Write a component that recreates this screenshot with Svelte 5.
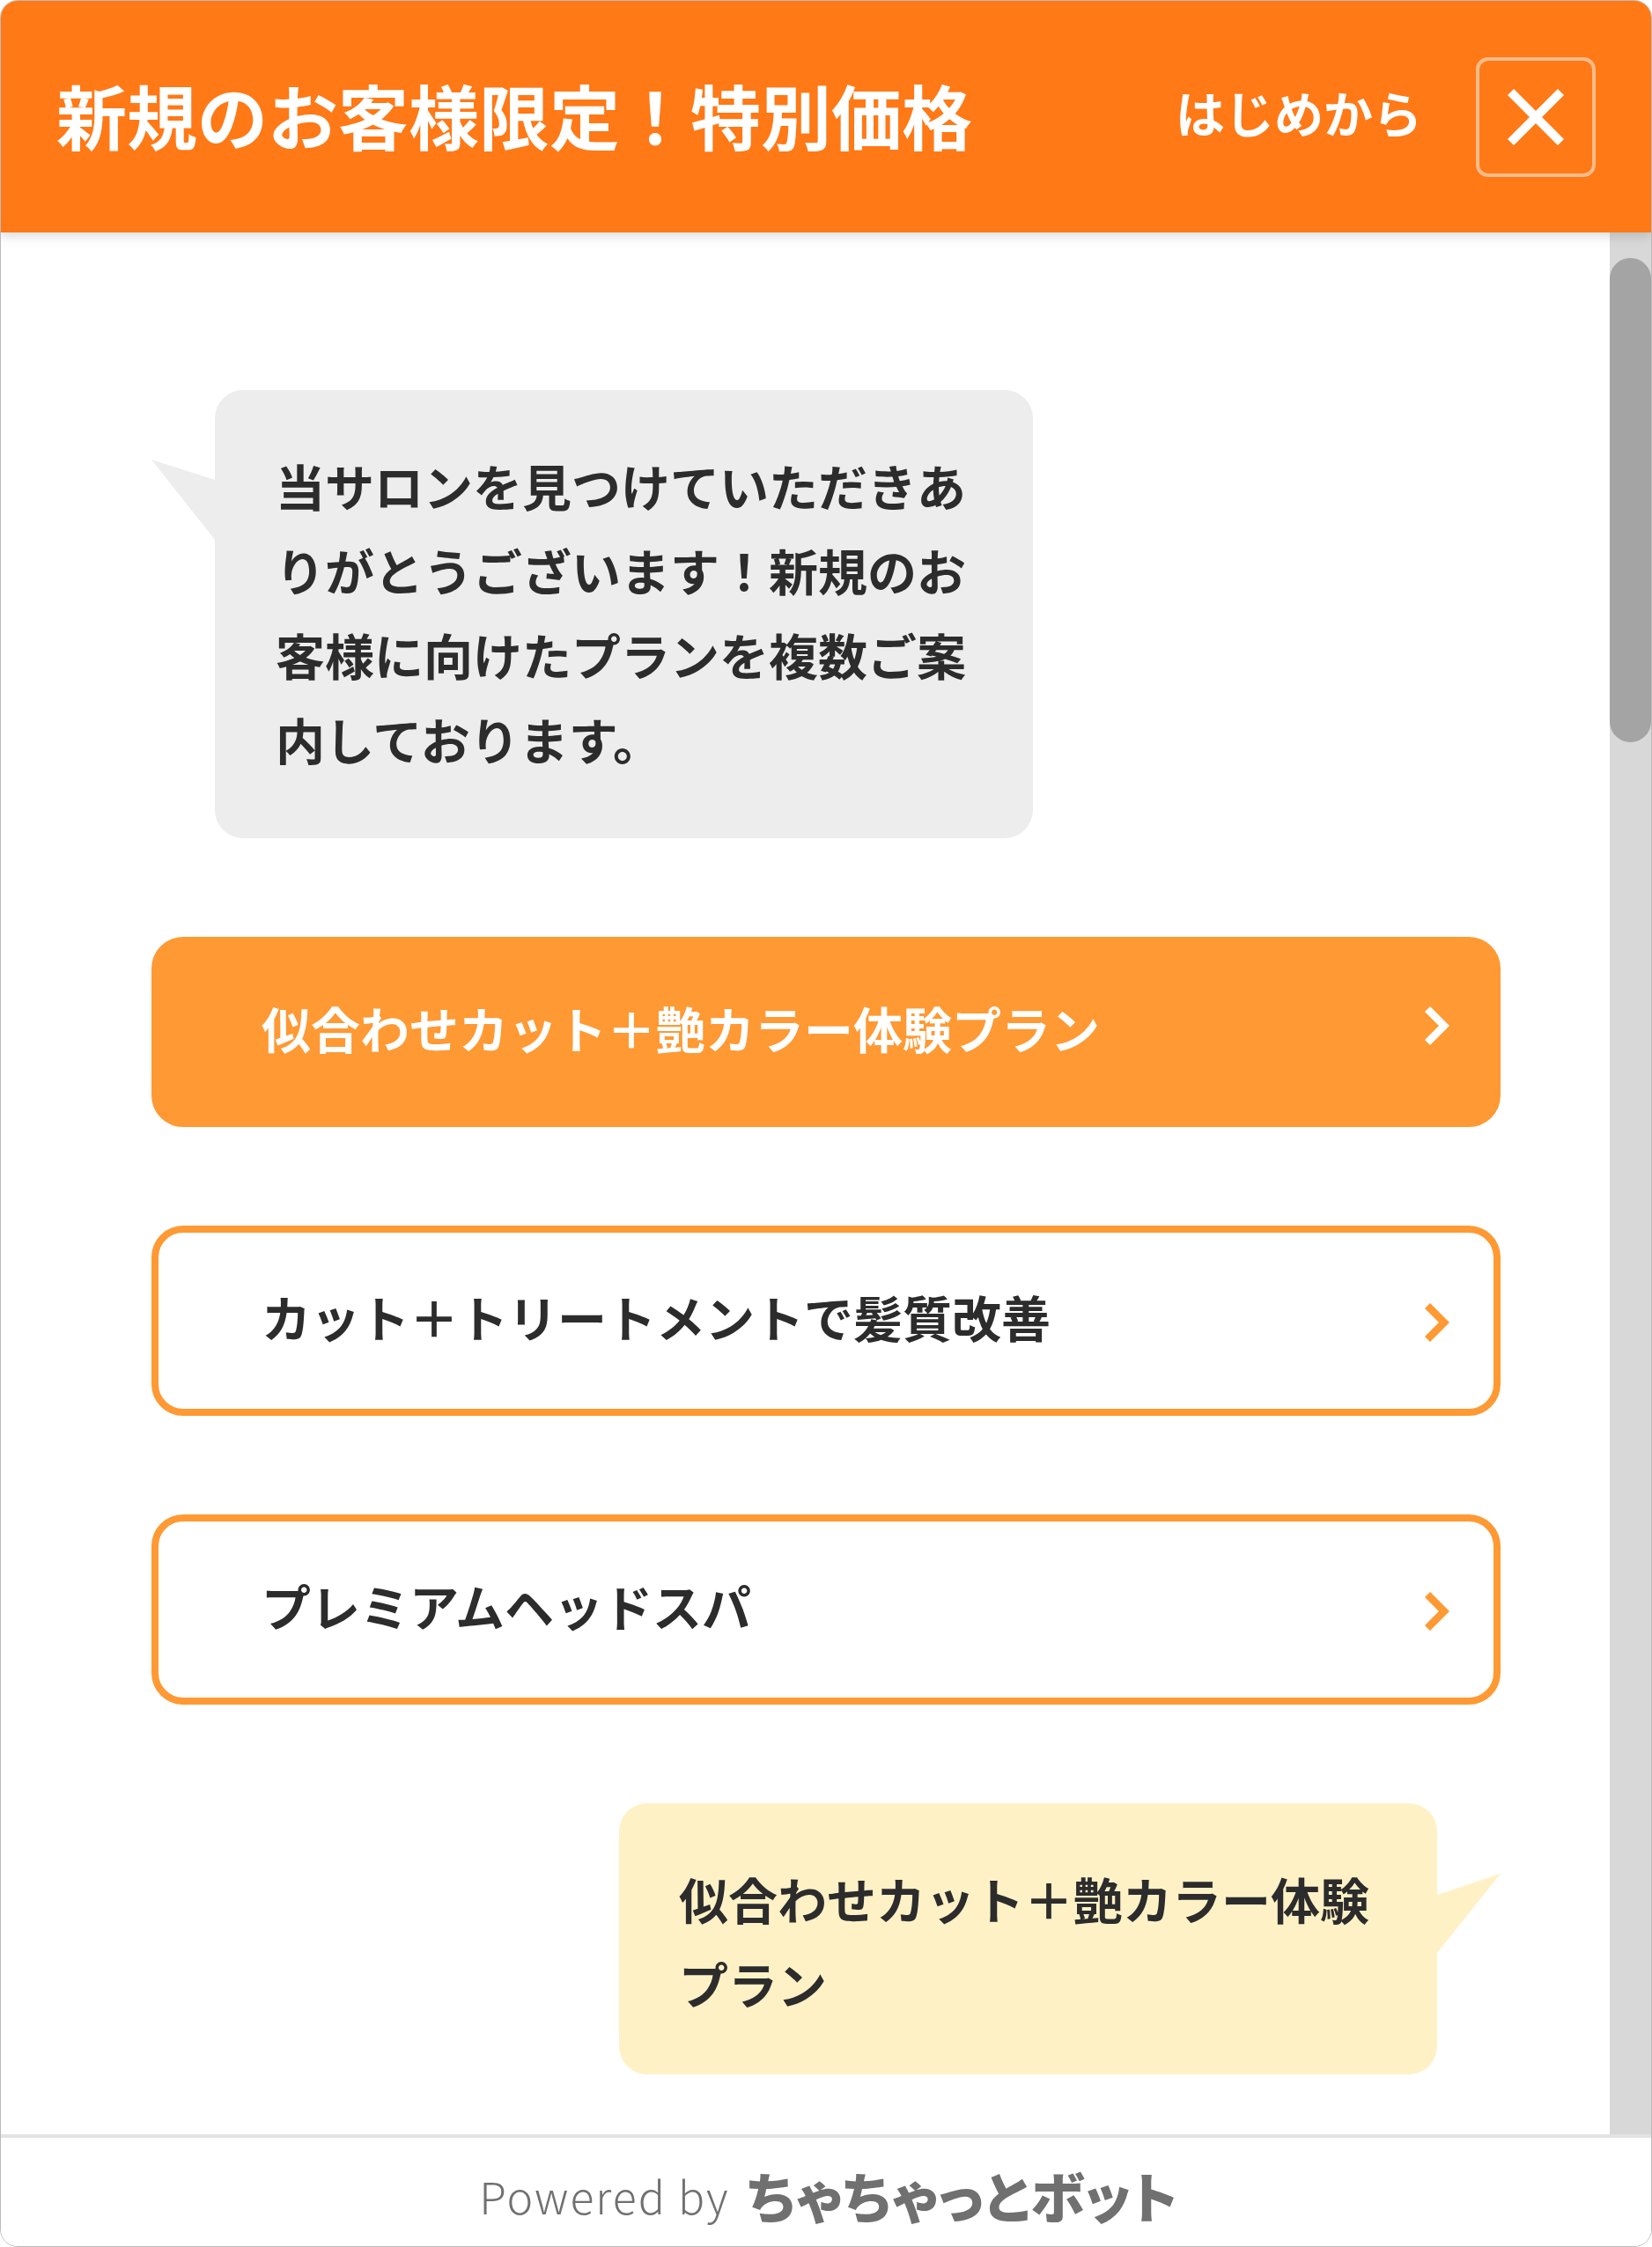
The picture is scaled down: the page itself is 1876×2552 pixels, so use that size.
<script lang="ts">
  // Chat widget: header, scripted conversation with choice buttons, powered-by footer.
  const intro = ["当サロンを見つけていただきあ", "りがとうございます！新規のお", "客様に向けたプランを複数ご案", "内しております。"];
  const choices = [
    { label: "似合わせカット＋艶カラー体験プラン", active: true },
    { label: "カット＋トリートメントで髪質改善", active: false },
    { label: "プレミアムヘッドスパ", active: false },
  ];
  const reply = ["似合わせカット＋艶カラー体験", "プラン"];
</script>

<div class="widget">
  <header class="head">
    <h1>新規のお客様限定！特別価格</h1>
    <button class="restart" type="button">はじめから</button>
    <button class="close" type="button" aria-label="閉じる">
      <svg width="64" height="64" viewBox="0 0 64 64">
        <path d="M3.5 3.5 60.5 60.5M60.5 3.5 3.5 60.5" fill="none" stroke="#fff" stroke-width="10" />
      </svg>
    </button>
  </header>

  <div class="main">
    <div class="log">
      <div class="bubble bot">
        <svg class="tail" width="72" height="92" viewBox="0 0 72 92"><path d="M72 23 0 0 72 91Z" fill="#ededed" /></svg>
        {#each intro as line}<div>{line}</div>{/each}
      </div>

      {#each choices as c}
        <button class="choice" class:active={c.active} type="button">
          <span>{c.label}</span>
          <svg class="chev" width="28" height="44" viewBox="0 0 28 44">
            <path d="M3 3 22 22 3 41" fill="none" stroke="currentColor" stroke-width="8.5" />
          </svg>
        </button>
      {/each}

      <div class="bubble user">
        <svg class="tail" width="72" height="92" viewBox="0 0 72 92"><path d="M0 24 72 0 0 90Z" fill="#fff1c6" /></svg>
        {#each reply as line}<div>{line}</div>{/each}
      </div>
    </div>
    <div class="track"><div class="thumb"></div></div>
  </div>

  <footer class="foot">
    <span class="powered">Powered by</span>
    <span class="logo">ちゃちゃっとボット</span>
  </footer>
</div>

<style>
  :global(body) {
    margin: 0;
    background: #fff;
  }
  .widget {
    box-sizing: border-box;
    height: 2552px;
    display: flex;
    flex-direction: column;
    overflow: hidden;
    border: 1px solid #bbb;
    border-radius: 20px;
    background: #fff;
    font-family: "Noto Sans CJK JP", "Noto Sans", sans-serif;
    color: #2c2c2c;
  }
  .head {
    flex: none;
    position: relative;
    z-index: 2;
    height: 263px;
    display: flex;
    align-items: center;
    padding: 0 63px 0 63px;
    background: #ff7916;
    color: #fff;
    box-shadow: 0 4px 12px rgba(0, 0, 0, 0.15);
  }
  h1 {
    flex: 1;
    margin: 0;
    padding-bottom: 8px;
    font-size: 80px;
    line-height: 1.2;
    font-weight: 700;
  }
  .restart {
    margin-right: 61px;
    padding: 0 0 12px;
    border: none;
    background: none;
    color: #fff;
    font: inherit;
    font-size: 56px;
    font-weight: 700;
  }
  .close {
    box-sizing: border-box;
    width: 136px;
    height: 136px;
    display: flex;
    align-items: center;
    justify-content: center;
    padding: 0;
    border: 4px solid rgba(255, 255, 255, 0.5);
    border-radius: 14px;
    background: none;
  }
  .main {
    flex: 1;
    min-height: 0;
    display: flex;
  }
  .log {
    flex: 1;
    display: flex;
    flex-direction: column;
    gap: 112px;
    padding: 179px 124px 0 171px;
  }
  .bubble {
    position: relative;
    box-sizing: border-box;
    width: 929px;
    border-radius: 32px;
    font-size: 56px;
    line-height: 96px;
    font-weight: 700;
    white-space: nowrap;
  }
  .bot {
    height: 509px;
    margin-left: 72px;
    padding: 60px 69px;
    background: #ededed;
  }
  .bot .tail {
    position: absolute;
    left: -72px;
    top: 79px;
  }
  .user {
    height: 308px;
    align-self: flex-end;
    margin-right: 72px;
    padding: 60px 68px 55px;
    background: #fff1c6;
  }
  .user .tail {
    position: absolute;
    left: 100%;
    top: 80px;
  }
  .choice {
    box-sizing: border-box;
    height: 216px;
    display: flex;
    align-items: center;
    justify-content: space-between;
    padding: 0 50px 0 117px;
    border: 8px solid #ff9933;
    border-radius: 36px;
    background: #fff;
    color: #2c2c2c;
    font: inherit;
    font-size: 56px;
    font-weight: 700;
    text-align: left;
  }
  .choice span {
    margin-bottom: 11px;
  }
  .choice.active {
    background: #ff9933;
    color: #fff;
  }
  .chev {
    color: #ff9933;
    margin-top: 3px;
  }
  .active .chev {
    color: #fff;
    margin-top: -14px;
  }
  .track {
    flex: none;
    width: 47px;
    padding-top: 29px;
    background: #d8d8d8;
  }
  .thumb {
    height: 550px;
    border-radius: 24px;
    background: #a4a4a4;
  }
  .foot {
    flex: none;
    position: relative;
    z-index: 1;
    box-sizing: border-box;
    height: 127px;
    display: flex;
    align-items: center;
    justify-content: center;
    gap: 20px;
    padding: 6px 0 0 6px;
    border-top: 4px solid #e3e3e3;
    background: #fff;
    color: #707070;
  }
  .powered {
    font-size: 50px;
    font-weight: 300;
    letter-spacing: 2px;
  }
  .logo {
    font-size: 62px;
    font-weight: 900;
    line-height: 1;
    font-feature-settings: "palt";
    letter-spacing: 0.8px;
  }
</style>
